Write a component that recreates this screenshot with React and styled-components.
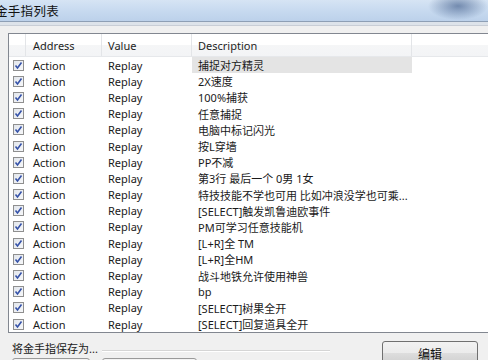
import React from "react";
import styled, { createGlobalStyle } from "styled-components";

const rows = [
  "捕捉对方精灵",
  "2X速度",
  "100%捕获",
  "任意捕捉",
  "电脑中标记闪光",
  "按L穿墙",
  "PP不减",
  "第3行 最后一个 0男  1女",
  "特技技能不学也可用 比如冲浪没学也可乘...",
  "[SELECT]触发凯鲁迪欧事件",
  "PM可学习任意技能机",
  "[L+R]全 TM",
  "[L+R]全HM",
  "战斗地铁允许使用神兽",
  "bp",
  "[SELECT]树果全开",
  "[SELECT]回复道具全开",
];

const GlobalStyle = createGlobalStyle`
  html, body {
    margin: 0;
    padding: 0;
    background: #f0f0f0;
  }
  body {
    font-family: "Noto Sans", "Noto Sans CJK SC", sans-serif;
    font-size: 11px;
    color: #1a1a1a;
  }
`;

const Window = styled.div`
  width: 488px;
  height: 360px;
  overflow: hidden;
  background: #f0f0f0;
  display: flex;
  flex-direction: column;
`;

const TitleBar = styled.div`
  height: 21px;
  flex: none;
  display: flex;
  align-items: center;
  background:
    radial-gradient(ellipse 30px 14px at 458px 6px, rgba(40, 70, 120, 0.55), rgba(40, 70, 120, 0) 100%),
    linear-gradient(180deg, #d6e4f4 0%, #c6d9ef 55%, #bcd1ea 100%);
  border-bottom: 1px solid #8e9fb5;
`;

const Title = styled.span`
  margin-left: -5px;
  font-size: 12.5px;
  color: #111;
  letter-spacing: 0.3px;
`;

const FrameStrip = styled.div`
  height: 3px;
  flex: none;
  background: #dde3ea;
  border-bottom: 1px solid #c9ced6;
`;

const Body = styled.div`
  flex: 1;
  padding: 7px 0 0 8px;
  display: flex;
  flex-direction: column;
`;

const ListView = styled.div`
  height: 298px;
  background: #fff;
  border: 1px solid #828790;
  border-right: none;
  overflow: hidden;
`;

const cols = "17px 76px 90px 220px 1fr";

const HeaderRow = styled.div`
  display: grid;
  grid-template-columns: ${cols};
  height: 23px;
  background: linear-gradient(180deg, #ffffff 0%, #ffffff 50%, #f5f6f7 51%, #f3f4f6 100%);
  border-bottom: 1px solid #e6e8eb;
  box-sizing: border-box;
`;

const HeaderCell = styled.div`
  display: flex;
  align-items: center;
  padding-left: ${(p) => p.$pad || 6}px;
  border-right: ${(p) => (p.$last ? "none" : "1px solid #e3e5e8")};
  color: #1e1e1e;
  white-space: nowrap;
`;

const Row = styled.div`
  display: grid;
  grid-template-columns: ${cols};
  height: 16.2px;
`;

const Cell = styled.div`
  display: flex;
  align-items: center;
  padding-left: ${(p) => p.$pad || 6}px;
  white-space: nowrap;
  overflow: hidden;
  background: ${(p) => (p.$hl ? "#e4e4e4" : "transparent")};
`;

const CheckCell = styled.div`
  display: flex;
  align-items: center;
  padding-left: 4px;
`;

const Box = styled.div`
  width: 11px;
  height: 11px;
  box-sizing: border-box;
  border: 1px solid #8f8f8f;
  background: linear-gradient(135deg, #e2e6ec 0%, #f6f7f9 100%);
  display: flex;
  align-items: center;
  justify-content: center;
`;

const Footer = styled.div`
  display: flex;
  align-items: flex-start;
  padding-top: 8px;
`;

const Group = styled.div`
  width: 322px;
  display: flex;
  flex-direction: column;
`;

const GroupTitle = styled.div`
  display: flex;
  align-items: center;
  gap: 4px;
  padding-left: 4px;
  height: 14px;
  white-space: nowrap;
  &::after {
    content: "";
    flex: 1;
    height: 1px;
    margin-top: 4px;
    background: #d5d5d5;
    box-shadow: 0 1px 0 #fff;
  }
`;

const GroupButtons = styled.div`
  display: flex;
  gap: 12px;
  padding: 3px 0 0 4px;
`;

const Stub = styled.div`
  width: ${(p) => p.$w}px;
  height: 12px;
  border: 1px solid #9a9a9a;
  border-radius: 3px;
  background: linear-gradient(180deg, #f4f4f4, #e6e6e6);
`;

const EditButton = styled.button`
  margin: 0 0 0 52px;
  width: 96px;
  height: 24px;
  border: 1px solid #707070;
  border-radius: 3px;
  background: linear-gradient(180deg, #f2f2f2 0%, #ebebeb 50%, #dddddd 51%, #cfcfcf 100%);
  font-family: "Noto Sans CJK SC", sans-serif;
  font-size: 12px;
  color: #111;
  padding: 0;
`;

const Check = () => (
  <svg width="9" height="9" viewBox="0 0 9 9">
    <path d="M1.5 4.5 L3.5 7 L7.5 1.5" fill="none" stroke="#3552a8" strokeWidth="1.6" />
  </svg>
);

export default function App() {
  return (
    <Window>
      <GlobalStyle />
      <TitleBar>
        <Title>金手指列表</Title>
      </TitleBar>
      <FrameStrip />
      <Body>
        <ListView>
          <HeaderRow>
            <HeaderCell />
            <HeaderCell $pad={7}>Address</HeaderCell>
            <HeaderCell>Value</HeaderCell>
            <HeaderCell>Description</HeaderCell>
            <HeaderCell $last />
          </HeaderRow>
          {rows.map((d, i) => (
            <Row key={i}>
              <CheckCell>
                <Box>
                  <Check />
                </Box>
              </CheckCell>
              <Cell $pad={7}>Action</Cell>
              <Cell>Replay</Cell>
              <Cell $hl={i === 0}>{d}</Cell>
              <Cell />
            </Row>
          ))}
        </ListView>
        <Footer>
          <Group>
            <GroupTitle>将金手指保存为...</GroupTitle>
            <GroupButtons>
              <Stub $w={76} />
              <Stub $w={93} />
            </GroupButtons>
          </Group>
          <EditButton>编辑</EditButton>
        </Footer>
      </Body>
    </Window>
  );
}
